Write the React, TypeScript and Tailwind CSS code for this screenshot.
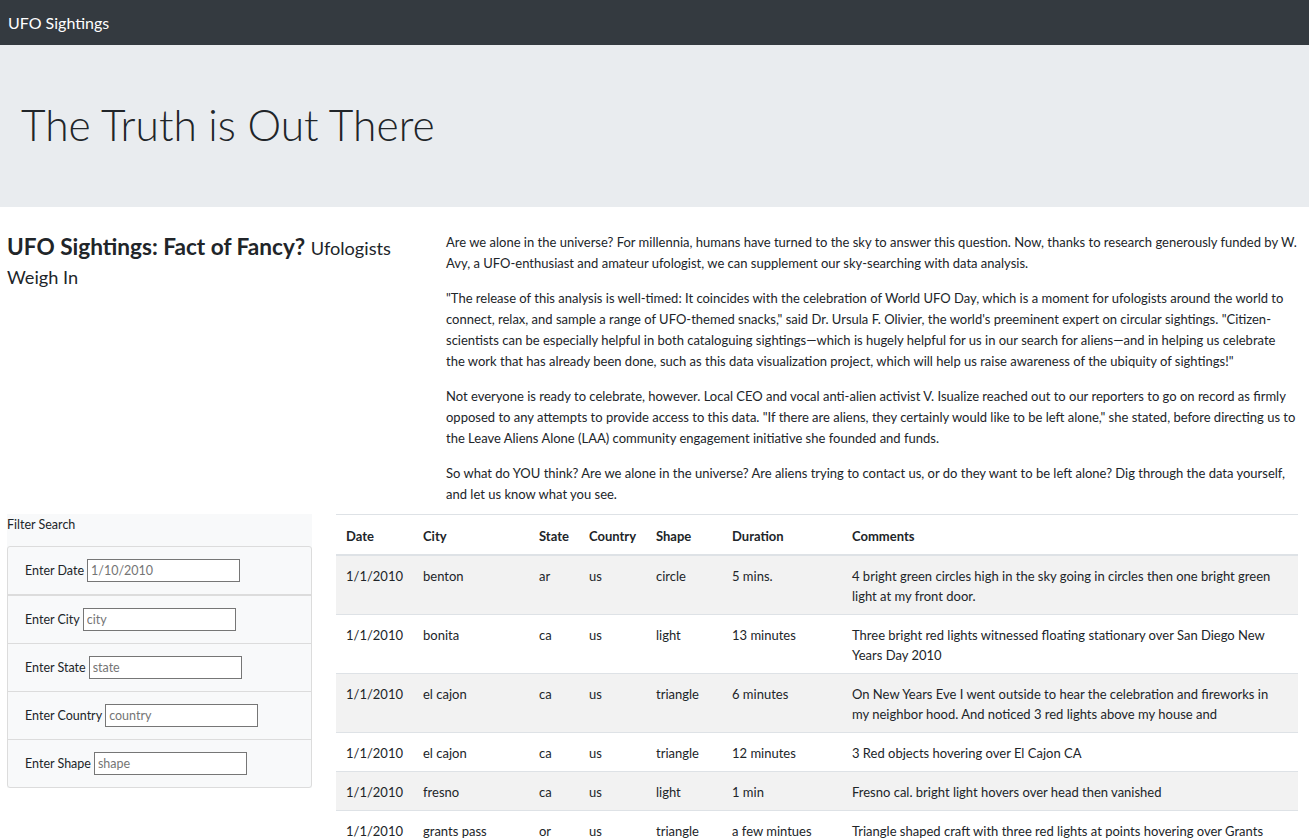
import React from "react";

interface Sighting {
  datetime: string;
  city: string;
  state: string;
  country: string;
  shape: string;
  duration: string;
  comments: string;
}

const sightings: Sighting[] = [
  { datetime: "1/1/2010", city: "benton", state: "ar", country: "us", shape: "circle", duration: "5 mins.", comments: "4 bright green circles high in the sky going in circles then one bright green light at my front door." },
  { datetime: "1/1/2010", city: "bonita", state: "ca", country: "us", shape: "light", duration: "13 minutes", comments: "Three bright red lights witnessed floating stationary over San Diego New Years Day 2010" },
  { datetime: "1/1/2010", city: "el cajon", state: "ca", country: "us", shape: "triangle", duration: "6 minutes", comments: "On New Years Eve I went outside to hear the celebration and fireworks in my neighbor hood. And noticed 3 red lights above my house and" },
  { datetime: "1/1/2010", city: "el cajon", state: "ca", country: "us", shape: "triangle", duration: "12 minutes", comments: "3 Red objects hovering over El Cajon CA" },
  { datetime: "1/1/2010", city: "fresno", state: "ca", country: "us", shape: "light", duration: "1 min", comments: "Fresno cal. bright light hovers over head then vanished" },
  { datetime: "1/1/2010", city: "grants pass", state: "or", country: "us", shape: "triangle", duration: "a few mintues", comments: "Triangle shaped craft with three red lights at points hovering over Grants Pass, OR" },
  { datetime: "1/1/2010", city: "hilo", state: "hi", country: "us", shape: "fireball", duration: "5 minutes", comments: "Orange fireball moving slowly across the sky, then faded out" },
];

const filters = [
  { label: "Enter Date", placeholder: "1/10/2010" },
  { label: "Enter City", placeholder: "city" },
  { label: "Enter State", placeholder: "state" },
  { label: "Enter Country", placeholder: "country" },
  { label: "Enter Shape", placeholder: "shape" },
];

// article copy, split where the original page wraps
const article: string[][] = [
  [
    "Are we alone in the universe? For millennia, humans have turned to the sky to answer this question. Now, thanks to research generously funded by W.",
    "Avy, a UFO-enthusiast and amateur ufologist, we can supplement our sky-searching with data analysis.",
  ],
  [
    "\"The release of this analysis is well-timed: It coincides with the celebration of World UFO Day, which is a moment for ufologists around the world to",
    "connect, relax, and sample a range of UFO-themed snacks,\" said Dr. Ursula F. Olivier, the world's preeminent expert on circular sightings. \"Citizen-",
    "scientists can be especially helpful in both cataloguing sightings—which is hugely helpful for us in our search for aliens—and in helping us celebrate",
    "the work that has already been done, such as this data visualization project, which will help us raise awareness of the ubiquity of sightings!\"",
  ],
  [
    "Not everyone is ready to celebrate, however. Local CEO and vocal anti-alien activist V. Isualize reached out to our reporters to go on record as firmly",
    "opposed to any attempts to provide access to this data. \"If there are aliens, they certainly would like to be left alone,\" she stated, before directing us to",
    "the Leave Aliens Alone (LAA) community engagement initiative she founded and funds.",
  ],
  [
    "So what do YOU think? Are we alone in the universe? Are aliens trying to contact us, or do they want to be left alone? Dig through the data yourself,",
    "and let us know what you see.",
  ],
];

export default function App() {
  return (
    <div className="min-h-screen bg-white text-[#212529] font-['Lato',sans-serif] text-[13px] leading-[21px]">
      {/* Navbar */}
      <nav className="h-[45px] bg-[#343a40] flex items-center px-2">
        <span className="text-white text-[16px]">UFO Sightings</span>
      </nav>

      {/* Jumbotron */}
      <div className="h-[162px] bg-[#e9ecef] flex items-center px-[21px] pb-[3px]">
        <h1 className="text-[42.5px] leading-[52px] font-light">The Truth is Out There</h1>
      </div>

      {/* Article */}
      <div className="flex pt-[25px]">
        <div className="w-[446px] shrink-0 pl-[7px] pr-4 pt-[1px]">
          <h3 className="text-[22.6px] leading-[27px] font-bold">
            UFO Sightings: Fact of Fancy?{" "}
            <small className="text-[18.2px] font-normal">Ufologists Weigh In</small>
          </h3>
        </div>
        <div className="flex-1 pr-1">
          {article.map((para, i) => (
            <p key={i} className={i === article.length - 1 ? "mb-[9px] whitespace-nowrap" : "mb-[14px] whitespace-nowrap"}>
              {para.map((line, j) => (
                <React.Fragment key={j}>
                  {line}
                  {j < para.length - 1 && <br />}
                </React.Fragment>
              ))}
            </p>
          ))}
        </div>
      </div>

      {/* Filters + table */}
      <div className="flex items-start">
        <aside className="w-[305px] ml-[7px] shrink-0 bg-[#f8f9fa]">
          <div className="text-[12.5px] leading-[19px] pt-[1px] pb-[12px]">Filter Search</div>
          <ul className="border border-[#dcdcdc] rounded-[3px]">
            {filters.map((f, i) => (
              <li
                key={f.label}
                className={
                  i === 0
                    ? "flex items-center h-[49px] pl-[17px] border-b-2 border-[#dcdcdc]"
                    : i === filters.length - 1
                    ? "flex items-center h-[47px] pl-[17px]"
                    : "flex items-center h-[48px] pl-[17px] border-b border-[#dcdcdc]"
                }
              >
                <label className="text-[12.5px] mr-[3px]">{f.label}</label>
                <input
                  type="text"
                  placeholder={f.placeholder}
                  className="w-[153px] h-[23px] border border-[#767676] bg-white px-[3px] text-[12.5px] placeholder:text-[#757575] outline-none"
                />
              </li>
            ))}
          </ul>
        </aside>

        <div className="flex-1 ml-[24px] mr-[11px]">
          <table className="w-full table-fixed border-collapse leading-[20px]">
            <colgroup>
              <col className="w-[77px]" />
              <col className="w-[116px]" />
              <col className="w-[50px]" />
              <col className="w-[67px]" />
              <col className="w-[76px]" />
              <col className="w-[120px]" />
              <col />
            </colgroup>
            <thead>
              <tr className="border-t border-[#dee2e6] border-b-2 border-b-[#dee2e6]">
                {["Date", "City", "State", "Country", "Shape", "Duration", "Comments"].map((h) => (
                  <th key={h} className="text-left font-bold px-[10px] pt-[11px] pb-[8px]">
                    {h}
                  </th>
                ))}
              </tr>
            </thead>
            <tbody>
              {sightings.map((s, i) => (
                <tr key={i} className={i % 2 === 0 ? "bg-[#f2f2f2] border-b border-[#dee2e6]" : "border-b border-[#dee2e6]"}>
                  <td className="align-top px-[10px] pt-[10px] pb-[8px]">{s.datetime}</td>
                  <td className="align-top px-[10px] pt-[10px] pb-[8px]">{s.city}</td>
                  <td className="align-top px-[10px] pt-[10px] pb-[8px]">{s.state}</td>
                  <td className="align-top px-[10px] pt-[10px] pb-[8px]">{s.country}</td>
                  <td className="align-top px-[10px] pt-[10px] pb-[8px]">{s.shape}</td>
                  <td className="align-top px-[10px] pt-[10px] pb-[8px]">{s.duration}</td>
                  <td className="align-top px-[10px] pt-[10px] pb-[8px]">{s.comments}</td>
                </tr>
              ))}
            </tbody>
          </table>
        </div>
      </div>
    </div>
  );
}
